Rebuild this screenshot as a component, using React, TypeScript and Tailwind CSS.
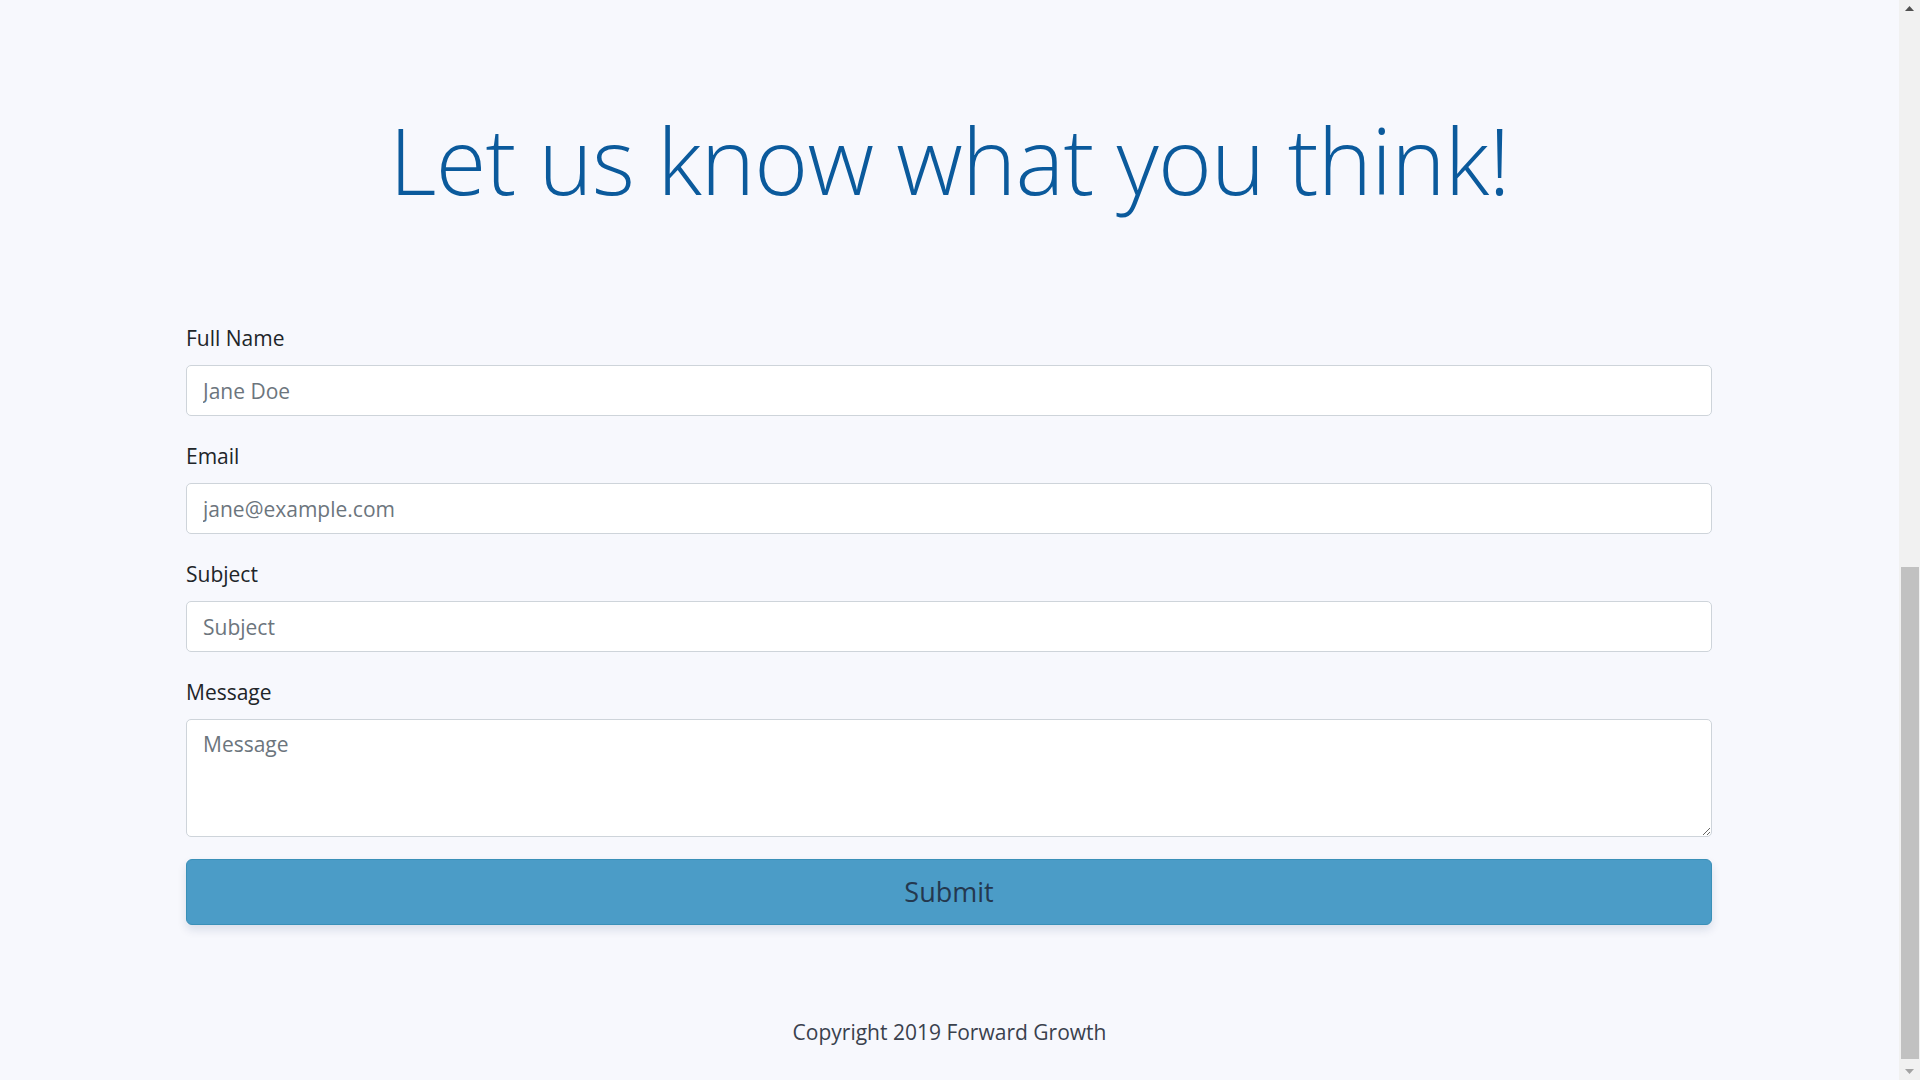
const fieldClass =
  'block w-full h-[51px] rounded-[5px] border border-[#ced4da] bg-white px-4 text-[21px] text-[#495057] placeholder:text-[#6c757d] outline-none'

interface FieldProps {
  label: string
  placeholder: string
  type?: string
}

const Field = ({ label, placeholder, type = 'text' }: FieldProps) => {
  return (
    <div className="mb-[25px]">
      <label className="block h-[30px] mb-[12px] text-[21px] leading-[30px] text-[#212529]">
        {label}
      </label>
      <input type={type} placeholder={placeholder} className={fieldClass} />
    </div>
  )
}

const Scrollbar = () => {
  return (
    <div className="flex flex-col w-[21px] h-screen bg-[#f1f1f1] shrink-0">
      <div className="flex items-center justify-center h-[17px]">
        <svg width="9" height="5" viewBox="0 0 9 5">
          <polygon points="4.5,0 9,5 0,5" fill="#505050" />
        </svg>
      </div>
      <div className="h-[550px]" />
      <div className="h-[492px] ml-[2px] mr-[1px] bg-[#c1c1c1]" />
      <div className="flex-1" />
      <div className="flex items-center justify-center h-[17px]">
        <svg width="9" height="5" viewBox="0 0 9 5">
          <polygon points="0,0 9,0 4.5,5" fill="#a3a3a3" />
        </svg>
      </div>
    </div>
  )
}

export default function App() {
  return (
    <div
      className="flex h-screen w-full overflow-hidden bg-[#f7f8fd]"
      style={{ fontFamily: '"Segoe UI", "Open Sans", "Noto Sans", sans-serif' }}
    >
      <main className="flex-1 min-w-0">
        <h1 className="mt-[99px] h-[122px] text-center text-[92px] leading-[122px] tracking-[-0.8px] font-light text-[#0b5a9c]">
          Let us know what you think!
        </h1>

        <form className="w-[1526px] ml-[186px] mt-[102px]">
          <Field label="Full Name" placeholder="Jane Doe" />
          <Field label="Email" placeholder="jane@example.com" type="email" />
          <Field label="Subject" placeholder="Subject" />
          <div>
            <label className="block h-[30px] mb-[12px] text-[21px] leading-[30px] text-[#212529]">
              Message
            </label>
            <textarea
              placeholder="Message"
              className="block w-full h-[118px] rounded-[5px] border border-[#ced4da] bg-white px-4 py-[9px] text-[21px] leading-[30px] text-[#495057] placeholder:text-[#6c757d] outline-none"
            />
          </div>
          <button
            type="button"
            className="mt-[22px] block w-full h-[66px] rounded-[6px] border border-[#3a90b8] bg-[#4b9cc7] text-[27px] text-[#24384f] shadow-[0_5px_10px_rgba(20,40,90,0.12)]"
          >
            Submit
          </button>
        </form>

        <p className="mt-[92px] h-[30px] text-center text-[21px] leading-[30px] text-[#3a414d]">
          Copyright 2019 Forward Growth
        </p>
      </main>
      <Scrollbar />
    </div>
  )
}
